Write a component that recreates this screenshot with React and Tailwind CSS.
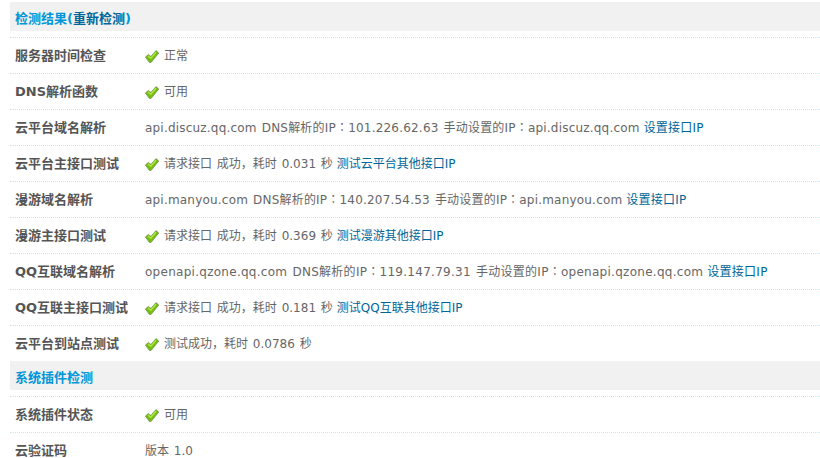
import React from "react"

const Check = () => (
  <svg width="14" height="13" viewBox="0 0 14 13" className="mr-[5px] shrink-0 mt-[1px]">
    <path d="M0.4 7 L3.4 4.4 L5.8 6.4 L11 0.6 L13.8 3 L6 12.6 L4.4 12.6 Z" fill="#74bf0e" stroke="#66784f" strokeWidth="0.6" strokeLinejoin="round" />
    <path d="M3 6 L5.8 8.2 L11 2.2" fill="none" stroke="#aee840" strokeWidth="1.4" />
  </svg>
)

const Link = ({ children }) => <a className="text-[#006699] ml-[4px]">{children}</a>

// full width punctuation sits centred in the reference
const P = ({ children }) => <span className="font-['Noto_Sans_CJK_KR',sans-serif]">{children}</span>

const Row = ({ label, ok, last, h35, className = "", children }) => (
  <div className={`flex items-center ${h35 ? "h-[35px]" : "h-[36px]"} ${last ? "" : "border-b border-dotted border-[#c4e6f5]"}`}>
    <div className="w-[135px] pl-[5px] text-[13px] font-bold text-[#555555]">{label}</div>
    <div className={`flex items-center text-[#666666] [word-spacing:1px] ${className}`}>
      {ok && <Check />}
      <span className="whitespace-pre">{children}</span>
    </div>
  </div>
)

const Heading = ({ children }) => (
  <div className="flex items-center h-[29px] pl-[5px] pt-[4px] bg-[#f1f1f1] text-[13px] font-bold text-[#0095d9] mb-[6px]">
    {children}
  </div>
)

export default function App() {
  return (
    <div className="h-[458px] overflow-hidden bg-white pl-[10px] pt-[2px] text-[12px] font-['DejaVu_Sans','Noto_Sans_CJK_SC',sans-serif]">
      <Heading>
        <span>检测结果(<span className="text-[#006699]">重新检测</span>)</span>
      </Heading>
      <div className="border-t border-dotted border-[#c4e6f5]">
        <Row label="服务器时间检查" ok>正常</Row>
        <Row label="DNS解析函数" ok>可用</Row>
        <Row label="云平台域名解析" className="tracking-[0.2px]">
          api.discuz.qq.com DNS解析的IP<P>：</P>101.226.62.63 手动设置的IP<P>：</P>api.discuz.qq.com<Link>设置接口IP</Link>
        </Row>
        <Row label="云平台主接口测试" ok>
          请求接口 成功<P>，</P>耗时 0.031 秒<Link>测试云平台其他接口IP</Link>
        </Row>
        <Row label="漫游域名解析" className="tracking-[0.2px]">
          api.manyou.com DNS解析的IP<P>：</P>140.207.54.53 手动设置的IP<P>：</P>api.manyou.com<Link>设置接口IP</Link>
        </Row>
        <Row label="漫游主接口测试" ok>
          请求接口 成功<P>，</P>耗时 0.369 秒<Link>测试漫游其他接口IP</Link>
        </Row>
        <Row label="QQ互联域名解析" className="tracking-[0.275px]">
          openapi.qzone.qq.com DNS解析的IP<P>：</P>119.147.79.31 手动设置的IP<P>：</P>openapi.qzone.qq.com<Link>设置接口IP</Link>
        </Row>
        <Row label="QQ互联主接口测试" ok>
          请求接口 成功<P>，</P>耗时 0.181 秒<Link>测试QQ互联其他接口IP</Link>
        </Row>
        <Row label="云平台到站点测试" ok last h35>
          测试成功<P>，</P>耗时 0.0786 秒
        </Row>
      </div>
      <Heading>系统插件检测</Heading>
      <div className="border-t border-dotted border-[#c4e6f5]">
        <Row label="系统插件状态" ok>可用</Row>
        <Row label="云验证码" last>版本 1.0</Row>
      </div>
    </div>
  )
}
